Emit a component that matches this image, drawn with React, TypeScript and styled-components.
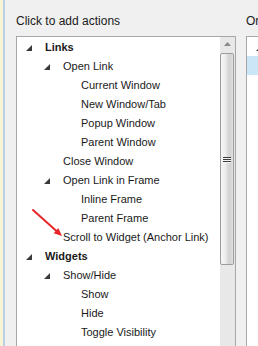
import React from "react";
import styled, { createGlobalStyle } from "styled-components";

const Global = createGlobalStyle`
  html, body { margin: 0; padding: 0; background: #f0f0f0; }
  * { box-sizing: border-box; }
`;

const Page = styled.div`
  position: relative;
  display: flex;
  width: 258px;
  height: 346px;
  overflow: hidden;
  background: #f0f0f0;
  font-family: "Liberation Sans", Arial, sans-serif;
  color: #1a1a1a;
`;

const WindowEdge = styled.div`
  flex: 0 0 5px;
  background: #f8f4d6;
  border-right: 2px solid #bcd0e4;
`;

const Column = styled.div<{ $width: number; $offset: number }>`
  flex: 0 0 ${(p) => p.$width}px;
  margin-left: ${(p) => p.$offset}px;
  display: flex;
  flex-direction: column;
  min-width: 0;
`;

const Heading = styled.div`
  height: 36px;
  padding-top: 5px;
  display: flex;
  align-items: center;
  font-size: 12px;
  white-space: nowrap;
  overflow: hidden;
`;

const Panel = styled.div`
  flex: 1;
  display: flex;
  background: #fff;
  border: 1px solid #a7a7a7;
  border-bottom: none;
  min-height: 0;
`;

const OpenPanel = styled(Panel)`
  border-right: none;
`;

const Tree = styled.div`
  flex: 1;
  display: flex;
  flex-direction: column;
  min-width: 0;
`;

const Row = styled.div<{ $level: number; $bold?: boolean; $selected?: boolean; $leaf?: boolean }>`
  flex: 0 0 19px;
  height: 19px;
  display: flex;
  align-items: center;
  padding-left: ${(p) => 9 + p.$level * 18 + (p.$leaf ? 19 : 0)}px;
  font-size: 11px;
  font-weight: ${(p) => (p.$bold ? 700 : 400)};
  white-space: nowrap;
  background: ${(p) => (p.$selected ? "#cbe7f7" : "transparent")};
`;

const Expander = styled.span`
  flex: 0 0 19px;
  display: flex;
  align-items: center;
  padding-top: 3px;
`;

const Scrollbar = styled.div`
  flex: 0 0 15px;
  display: flex;
  flex-direction: column;
  align-items: flex-start;
  background: #e8e8e8;
`;

const ScrollButton = styled.div`
  height: 16px;
  width: 14px;
  display: flex;
  justify-content: center;
  align-items: flex-start;
  padding-top: 5px;
`;

const Thumb = styled.div`
  width: 14px;
  height: 212px;
  border: 1px solid #9c9c9c;
  border-radius: 2px;
  background: linear-gradient(
    to right,
    #f6f6f6 0%,
    #ededed 35%,
    #d7d7d7 60%,
    #d3d3d3 80%,
    #e4e4e4 100%
  );
  display: flex;
  align-items: center;
  justify-content: center;
`;

const Grip = styled.div`
  width: 8px;
  display: flex;
  flex-direction: column;
  gap: 1px;
`;

const GripLine = styled.div`
  height: 1px;
  background: #3c3c3c;
  box-shadow: 0 1px 0 #f4f4f4;
`;

const Overlay = styled.svg`
  position: absolute;
  left: 30px;
  top: 205px;
  pointer-events: none;
`;

const Triangle = () => (
  <svg width="6" height="6" viewBox="0 0 6 6">
    <polygon points="6,0 6,6 0,6" fill="#3a3a3a" />
  </svg>
);

type Item = { label: string; level: number; bold?: boolean; open?: boolean };

const items: Item[] = [
  { label: "Links", level: 0, bold: true, open: true },
  { label: "Open Link", level: 1, open: true },
  { label: "Current Window", level: 2 },
  { label: "New Window/Tab", level: 2 },
  { label: "Popup Window", level: 2 },
  { label: "Parent Window", level: 2 },
  { label: "Close Window", level: 1 },
  { label: "Open Link in Frame", level: 1, open: true },
  { label: "Inline Frame", level: 2 },
  { label: "Parent Frame", level: 2 },
  { label: "Scroll to Widget (Anchor Link)", level: 1 },
  { label: "Widgets", level: 0, bold: true, open: true },
  { label: "Show/Hide", level: 1, open: true },
  { label: "Show", level: 2 },
  { label: "Hide", level: 2 },
  { label: "Toggle Visibility", level: 2 },
];

export default function App() {
  return (
    <>
      <Global />
      <Page>
        <WindowEdge />
        <Column $width={220} $offset={11}>
          <Heading>Click to add actions</Heading>
          <Panel>
            <Tree>
              {items.map((it) => (
                <Row key={it.label} $level={it.level} $bold={it.bold} $leaf={!it.open}>
                  {it.open && (
                    <Expander>
                      <Triangle />
                    </Expander>
                  )}
                  {it.label}
                </Row>
              ))}
            </Tree>
            <Scrollbar>
              <ScrollButton>
                <svg width="7" height="4" viewBox="0 0 7 4">
                  <polygon points="3.5,0 7,4 0,4" fill="#8a8a8a" />
                </svg>
              </ScrollButton>
              <Thumb>
                <Grip>
                  <GripLine />
                  <GripLine />
                  <GripLine />
                </Grip>
              </Thumb>
            </Scrollbar>
          </Panel>
        </Column>
        <Column $width={60} $offset={10}>
          <Heading>Organize actions</Heading>
          <OpenPanel>
            <Tree>
              <Row $level={0}>
                <Expander>
                  <Triangle />
                </Expander>
              </Row>
              <Row $level={0} $selected />
            </Tree>
          </OpenPanel>
        </Column>
        <Overlay width="40" height="40" viewBox="0 0 40 40">
          <line x1="3" y1="5" x2="27" y2="26.5" stroke="#e8262a" strokeWidth="2" strokeLinecap="round" />
          <polygon points="32,31 23.7,28.3 28.3,23.1" fill="#e8262a" />
        </Overlay>
      </Page>
    </>
  );
}
